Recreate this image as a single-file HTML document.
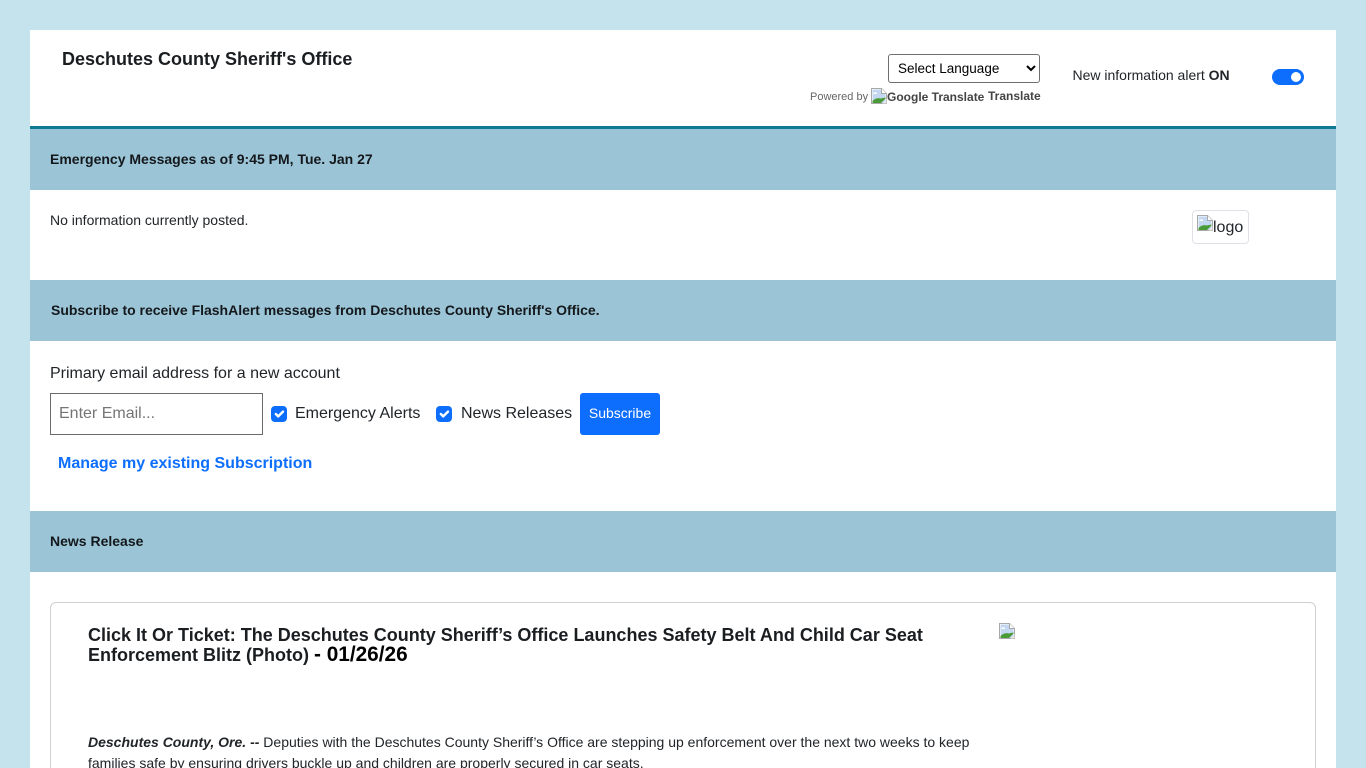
<!DOCTYPE html>
<html lang="en">
<head>
<meta charset="utf-8">
<title>Deschutes County Sheriff's Office</title>
<style>
html,body{margin:0;padding:0;width:1366px;height:768px;overflow:hidden;background:#c4e3ed;font-family:"Liberation Sans",Arial,sans-serif;color:#212529}
*{box-sizing:border-box}
#page{position:absolute;left:0;top:0;width:1366px;height:768px;overflow:hidden;background:#c4e3ed}
#w{position:absolute;left:30px;top:30px;width:1306px;height:738px;background:#fff;overflow:hidden}
.a{position:absolute;white-space:nowrap}
.band{position:absolute;left:30px;width:1306px;background:#9bc5d6}
.b{font-weight:700;font-size:14px;line-height:20px;color:#14181c}
.cb{position:absolute;width:16px;height:16px;border-radius:4px;background:#0d6efd}
</style>
</head>
<body>
<svg width="0" height="0" style="position:absolute"><defs>
<symbol id="broken" viewBox="0 0 16 16">
<path d="M.5.5H10.5L15.5 5.5V15.5H.5Z" fill="#fff" stroke="#a8a8a8"/>
<path d="M1.5 1.5H10V6H14.5V13.5L12 15H1.5Z" fill="#c4d7f0"/>
<path d="M2.5 4.5H6V6H2.5Z" fill="#fff"/>
<path d="M1.5 15V13C4 10.5 7 9.5 9.5 10.5L14.5 9.5V10.5L10 15Z" fill="#4a9a38"/>
<path d="M10.5.5V5.5H15.5" fill="#fff" stroke="#a8a8a8"/>
<path d="M15.5 11 11.5 15.5H15.5Z" fill="#e8e8e8"/>
</symbol>
<symbol id="tick" viewBox="0 0 20 20"><path d="M6 10l3 3 6-6" fill="none" stroke="#fff" stroke-width="3" stroke-linecap="round" stroke-linejoin="round"/></symbol>
</defs></svg>
<div id="page">
<div id="w"></div>

<div class="a" style="left:62px;top:48px;font-size:18px;line-height:22px;font-weight:700;color:#1a1e21">Deschutes County Sheriff's Office</div>

<select class="a" style="left:888px;top:54px;width:152px;height:29px;font:13.5px 'Liberation Sans',sans-serif;padding:0 0 1px 5px;background:#fff;color:#000;border:1px solid #6f6f6f;border-radius:3px">
<option>Select Language</option>
</select>
<div class="a" style="left:810px;top:89px;height:17px;font-size:11px;line-height:16px;color:#666">Powered by</div>
<svg class="a" style="left:871px;top:88px" width="16" height="16"><use href="#broken"/></svg>
<div class="a" style="left:887px;top:88px;font-size:12px;line-height:18px;font-weight:700;color:#444">Google Translate</div>
<div class="a" style="left:988px;top:87px;font-size:12px;line-height:18px;font-weight:700;color:#444">Translate</div>

<div class="a" style="left:1072.5px;top:65px;font-size:14px;line-height:20px">New information alert <b>ON</b></div>
<div class="a" style="left:1272px;top:69px;width:32px;height:16px;border-radius:8px;background:#0d6efd"></div>
<div class="a" style="left:1291px;top:72px;width:10px;height:10px;border-radius:50%;background:#fff"></div>

<div class="a" style="left:30px;top:126px;width:1306px;height:3px;background:#0f7a90"></div>

<div class="band" style="top:129px;height:61px"></div>
<div class="a b" style="left:50px;top:149px">Emergency Messages as of 9:45 PM, Tue. Jan 27</div>

<div class="a" style="left:50px;top:210px;font-size:14px;line-height:20px;color:#212529">No information currently posted.</div>
<div class="a" style="left:1192px;top:210px;width:57px;height:34px;border:1px solid #dee2e6;border-radius:4px;background:#fff"></div>
<svg class="a" style="left:1197px;top:215px" width="16" height="16"><use href="#broken"/></svg>
<div class="a" style="left:1213px;top:217px;font-size:16px;line-height:22px;color:#212529">logo</div>

<div class="band" style="top:280px;height:61px"></div>
<div class="a b" style="left:51px;top:300px;letter-spacing:-.012px">Subscribe to receive FlashAlert messages from Deschutes County Sheriff's Office.</div>

<div class="a" style="left:50px;top:363px;font-size:16px;line-height:21px">Primary email address for a new account</div>
<div class="a" style="left:50px;top:393px;width:213px;height:42px;border:1px solid #6a6a6a;background:#fff;padding-left:8px;font-size:16px;line-height:40px;color:#757575">Enter Email...</div>

<div class="cb" style="left:271px;top:406px"><svg width="16" height="16" style="display:block"><use href="#tick"/></svg></div>
<div class="a" style="left:295px;top:403px;font-size:16px;line-height:21px">Emergency Alerts</div>
<div class="cb" style="left:436px;top:406px"><svg width="16" height="16" style="display:block"><use href="#tick"/></svg></div>
<div class="a" style="left:461px;top:403px;font-size:16px;line-height:21px">News Releases</div>
<div class="a" style="left:580px;top:393px;width:80px;height:42px;background:#0d6efd;border-radius:3px;color:#fff;font-size:14px;line-height:40px;text-align:center">Subscribe</div>

<div class="a" style="left:58px;top:453px;font-size:16px;line-height:21px;font-weight:700;color:#0d6efd">Manage my existing Subscription</div>

<div class="band" style="top:511px;height:61px"></div>
<div class="a b" style="left:50px;top:531px">News Release</div>

<div class="a" style="left:50px;top:602px;width:1266px;height:190px;border:1px solid #d0d0d0;border-radius:6px;background:#fff"></div>
<div class="a" style="left:88px;top:626px;font-size:18px;line-height:19px;font-weight:700;color:#1a1e21">Click It Or Ticket: The Deschutes County Sheriff’s Office Launches Safety Belt And Child Car Seat<br>Enforcement Blitz (Photo) <span style="font-size:20.8px;line-height:19px;color:#000;vertical-align:baseline">- 01/26/26</span></div>
<svg class="a" style="left:999px;top:623px" width="16" height="16"><use href="#broken"/></svg>
<div class="a" style="left:88px;top:732px;font-size:14px;line-height:21px;color:#212529"><b><i>Deschutes County, Ore. --</i></b> Deputies with the Deschutes County Sheriff’s Office are stepping up enforcement over the next two weeks to keep<br>families safe by ensuring drivers buckle up and children are properly secured in car seats.</div>
</div>
</body>
</html>
